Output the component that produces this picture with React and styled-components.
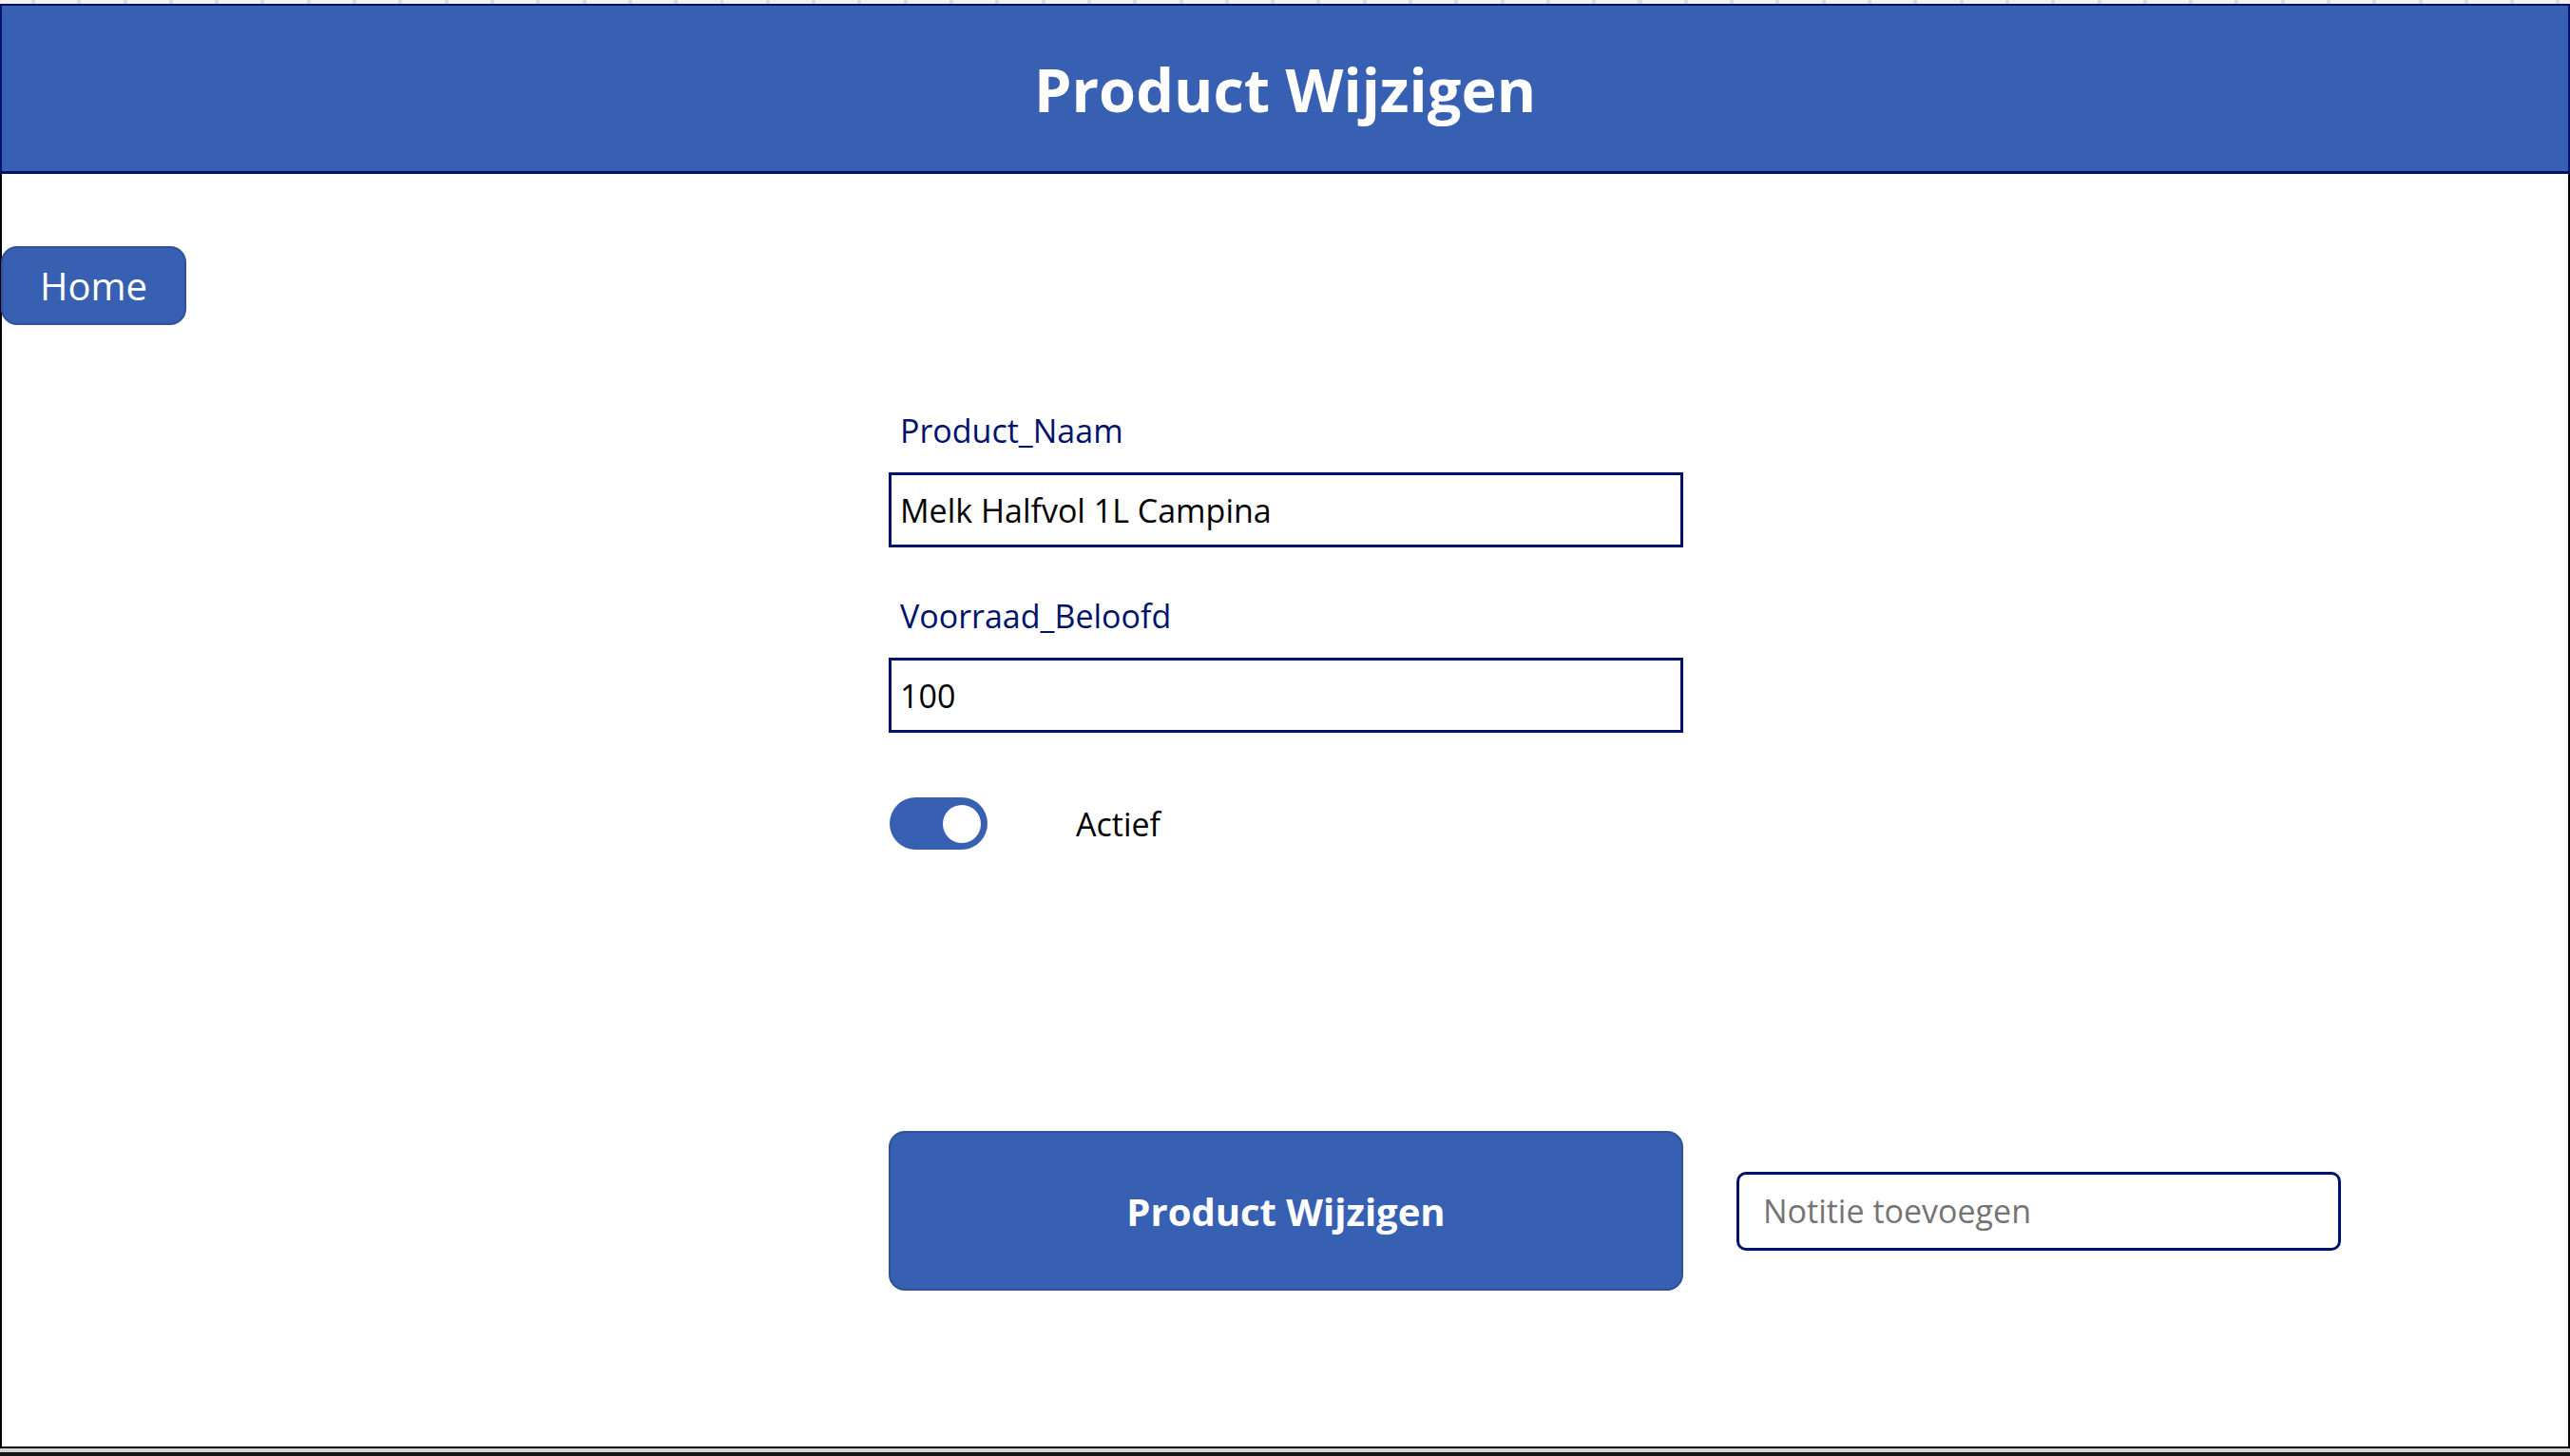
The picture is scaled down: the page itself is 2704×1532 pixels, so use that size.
import React from "react";
import styled, { createGlobalStyle } from "styled-components";

const GlobalStyle = createGlobalStyle`
  html, body {
    margin: 0;
    padding: 0;
    background: #ffffff;
  }
  * { box-sizing: border-box; }
`;

const NAVY = "#00126B";
const BLUE = "#3860B2";

const Page = styled.div`
  width: 2704px;
  height: 1532px;
  display: flex;
  flex-direction: column;
  font-family: "Open Sans", "Noto Sans", sans-serif;
  background: #ffffff;
  overflow: hidden;
`;

const TopStrip = styled.div`
  height: 4px;
  flex: none;
  background-color: #f3f3f3;
  background-image: repeating-linear-gradient(
    90deg,
    transparent 0px,
    transparent 33px,
    #dcdcdc 33px,
    #dcdcdc 37px,
    transparent 37px,
    transparent 48.3px
  );
`;

const Header = styled.header`
  height: 179px;
  flex: none;
  background: ${BLUE};
  border: 2px solid ${NAVY};
  border-bottom-width: 3px;
  display: flex;
  align-items: center;
  justify-content: center;
`;

const Title = styled.h1`
  margin: 0;
  color: #ffffff;
  font-size: 63px;
  font-weight: 700;
  line-height: 1;
`;

const Body = styled.main`
  flex: 1;
  background: #ffffff;
  border: 2px solid #000000;
  border-top: none;
  padding-top: 76px;
  display: flex;
  flex-direction: column;
  align-items: flex-start;
`;

const HomeButton = styled.button`
  width: 195px;
  height: 83px;
  margin-left: -1px;
  background: ${BLUE};
  color: #ffffff;
  border: 2px solid #2f519b;
  border-radius: 17px;
  font-family: inherit;
  font-size: 40px;
  font-weight: 400;
  padding: 0;
  cursor: pointer;
`;

const Form = styled.section`
  margin-left: 933px;
  margin-top: 88px;
  display: flex;
  flex-direction: column;
  align-items: flex-start;
`;

const FieldLabel = styled.label`
  display: block;
  color: ${NAVY};
  font-size: 34px;
  line-height: 46px;
  padding-left: 12px;
  margin-top: ${(p) => p.$gap}px;
`;

const TextBox = styled.input`
  display: block;
  width: 836px;
  height: 79px;
  margin-top: 21px;
  border: 3px solid ${NAVY};
  border-radius: 0;
  padding: 0 0 0 9px;
  font-family: inherit;
  font-size: 34px;
  color: #000000;
  background: #ffffff;
  outline: none;
`;

const ToggleRow = styled.div`
  display: flex;
  align-items: center;
  margin-top: 68px;
  margin-left: 1px;
`;

const Track = styled.span`
  width: 103px;
  height: 55px;
  border-radius: 28px;
  background: ${BLUE};
  display: flex;
  align-items: center;
  justify-content: flex-end;
  padding-right: 7px;
`;

const Knob = styled.span`
  width: 40px;
  height: 40px;
  border-radius: 50%;
  background: #ffffff;
`;

const ToggleText = styled.span`
  margin-left: 93px;
  font-size: 34px;
  color: #000000;
`;

const Actions = styled.div`
  display: flex;
  align-items: center;
  margin-top: 296px;
`;

const PrimaryButton = styled.button`
  width: 836px;
  height: 168px;
  background: ${BLUE};
  color: #ffffff;
  border: 2px solid #2f519b;
  border-radius: 17px;
  font-family: inherit;
  font-size: 40px;
  font-weight: 700;
  cursor: pointer;
`;

const NoteBox = styled.input`
  width: 636px;
  height: 83px;
  margin-left: 56px;
  border: 3px solid ${NAVY};
  border-radius: 10px;
  padding: 0 0 0 25px;
  font-family: inherit;
  font-size: 34px;
  color: #000000;
  outline: none;
  &::placeholder {
    color: #747474;
  }
`;

const BottomStrip = styled.div`
  flex: none;
  height: 4px;
  background: ${(p) => p.$color};
`;

export default function App() {
  return (
    <>
      <GlobalStyle />
      <Page>
        <TopStrip />
        <Header>
          <Title>Product Wijzigen</Title>
        </Header>
        <Body>
          <HomeButton>Home</HomeButton>
          <Form>
            <FieldLabel $gap={0}>Product_Naam</FieldLabel>
            <TextBox defaultValue="Melk Halfvol 1L Campina" />
            <FieldLabel $gap={49}>Voorraad_Beloofd</FieldLabel>
            <TextBox defaultValue="100" />
            <ToggleRow>
              <Track>
                <Knob />
              </Track>
              <ToggleText>Actief</ToggleText>
            </ToggleRow>
            <Actions>
              <PrimaryButton>Product Wijzigen</PrimaryButton>
              <NoteBox placeholder="Notitie toevoegen" />
            </Actions>
          </Form>
        </Body>
        <BottomStrip $color="#d4d4d4" />
        <BottomStrip $color="#161616" />
      </Page>
    </>
  );
}
